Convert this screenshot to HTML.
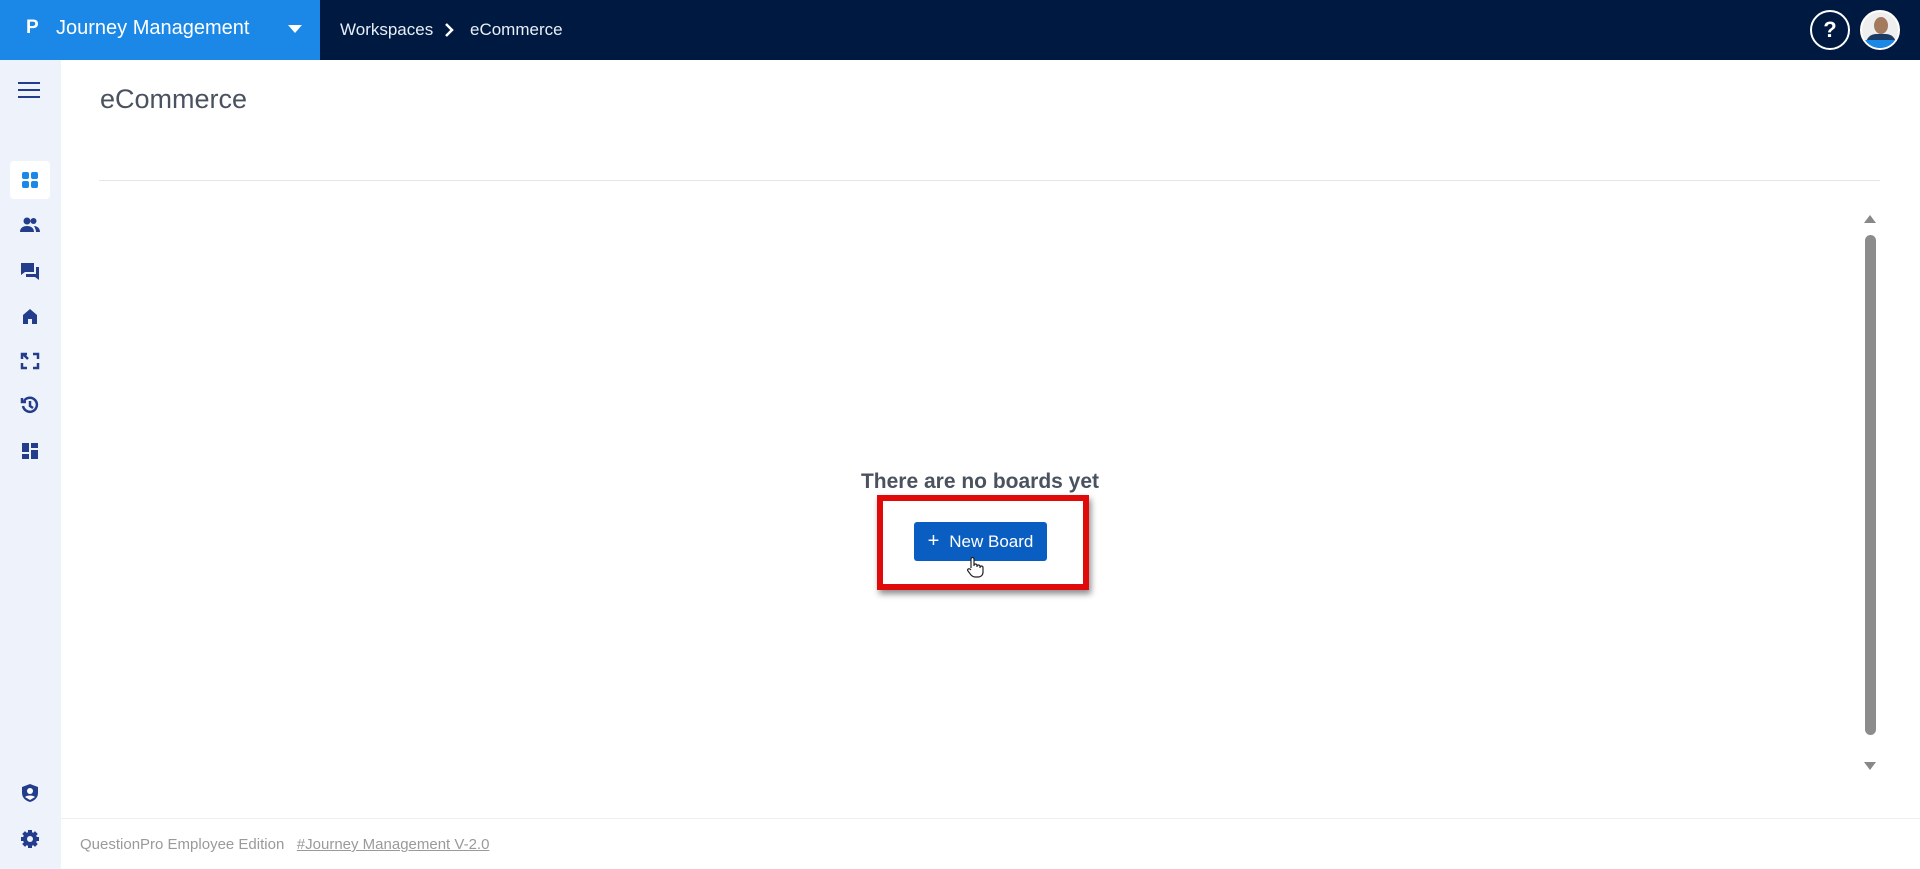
<!DOCTYPE html>
<html><head><meta charset="utf-8"><style>
*{margin:0;padding:0;box-sizing:border-box}
body{width:1920px;height:869px;overflow:hidden;background:#fff;font-family:"Liberation Sans",sans-serif;position:relative}
.hdr{position:absolute;left:0;top:0;width:1920px;height:60px;background:#001941}
.brand{position:absolute;left:0;top:0;width:320px;height:60px;background:#1b87e6;color:#fff}
.side{position:absolute;left:0;top:60px;width:61px;height:809px;background:#eef3fb}
.ic{position:absolute;left:20px;width:20px;height:20px}
.abs{position:absolute}
</style></head><body>
<div class="hdr">
 <div class="brand">
  <div class="abs" style="left:26px;top:17px;font-size:19px;font-weight:bold">P</div>
  <div class="abs" style="left:56px;top:17px;font-size:20px">Journey Management</div>
  <div class="abs" style="left:288px;top:25px;width:0;height:0;border-left:7px solid transparent;border-right:7px solid transparent;border-top:8px solid #fff"></div>
 </div>
 <div class="abs" style="left:340px;top:20px;font-size:17px;color:#e8eef8">Workspaces</div>
 <svg class="abs" style="left:444px;top:22px" width="10" height="16" viewBox="0 0 10 16"><path d="M2 2l6 6-6 6" fill="none" stroke="#fff" stroke-width="2.5"/></svg>
 <div class="abs" style="left:470px;top:20px;font-size:17px;color:#e8eef8">eCommerce</div>
 <div class="abs" style="left:1810px;top:10px;width:40px;height:40px;border:2px solid #fff;border-radius:50%;color:#fff;font-weight:bold;font-size:22px;text-align:center;line-height:36px">?</div>
 <div class="abs" style="left:1860px;top:10px;width:40px;height:40px;border:2px solid #fff;border-radius:50%;overflow:hidden;background:#eee">
  <div class="abs" style="left:12px;top:5px;width:14px;height:17px;border-radius:50%;background:#a47a5e"></div>
  <div class="abs" style="left:4px;top:22px;width:30px;height:20px;border-radius:10px 10px 0 0;background:#1b3a66"></div>
  <div class="abs" style="left:0;top:28px;width:40px;height:12px;background:#1b87e6"></div>
 </div>
</div>
<div class="side">
 <div class="abs" style="left:18px;top:22px;width:22px;height:2px;background:#233d8c;box-shadow:0 7px 0 #233d8c,0 14px 0 #233d8c"></div>
 <div class="abs" style="left:10px;top:101px;width:40px;height:38px;background:#fff;border-radius:4px"></div>
 <svg class="ic" style="top:110px" viewBox="0 0 20 20"><g fill="#1b87e6"><rect x="2" y="2" width="7" height="7" rx="2"/><rect x="11" y="2" width="7" height="7" rx="2"/><rect x="2" y="11" width="7" height="7" rx="2"/><rect x="11" y="11" width="7" height="7" rx="2"/></g></svg>
 <svg class="ic" style="top:155px" viewBox="0 0 20 20" fill="#233d8c"><circle cx="7" cy="6" r="3.5"/><circle cx="13.5" cy="6" r="3"/><path d="M0 17c0-4 3-6 7-6s7 2 7 6zM14 11c3 0 6 2 6 6h-4c0-2-1-4-2-6z"/></svg>
 <svg class="ic" style="top:201px" viewBox="0 0 20 20" fill="#233d8c"><path d="M1 2h13v9H5l-4 3z"/><path d="M16 6h3v13l-4-3H6v-3h10z"/></svg>
 <svg class="ic" style="top:246px" viewBox="0 0 20 20" fill="#233d8c"><path d="M10 3l7 6v9h-5v-5H8v5H3V9z"/></svg>
 <svg class="ic" style="top:291px" viewBox="0 0 20 20" fill="none" stroke="#233d8c" stroke-width="2.5"><path d="M2 8V3h5M13 3h5v5M18 12v5h-5M7 17H2v-5M3 3l5 5"/></svg>
 <svg class="ic" style="top:335px" viewBox="0 0 20 20" fill="none" stroke="#233d8c" stroke-width="2.5"><path d="M4 6a7 7 0 1 1-1 5"/><path d="M10 6v5l3 2"/><path d="M2 3v4h4" /></svg>
 <svg class="ic" style="top:381px" viewBox="0 0 20 20" fill="#233d8c"><rect x="2" y="2" width="7" height="9"/><rect x="11" y="2" width="7" height="5"/><rect x="2" y="13" width="7" height="5"/><rect x="11" y="9" width="7" height="9"/></svg>
 <svg class="ic" style="top:723px" viewBox="0 0 20 20" fill="#233d8c"><path d="M10 1l8 3v6c0 5-4 8-8 9-4-1-8-4-8-9V4z"/><circle cx="10" cy="8" r="3" fill="#fff"/><path d="M5 14c2-2 8-2 10 0l-5 3z" fill="#fff"/></svg>
 <svg class="ic" style="top:769px" viewBox="0 0 20 20"><g fill="#233d8c"><circle cx="10" cy="10" r="7"/><g stroke="#233d8c" stroke-width="4"><path d="M10 1v18M1 10h18M3.6 3.6l12.8 12.8M16.4 3.6L3.6 16.4"/></g></g><circle cx="10" cy="10" r="3" fill="#eef3fb"/></svg>
</div>
<div class="abs" style="left:100px;top:84px;font-size:27px;color:#4a5260">eCommerce</div>
<div class="abs" style="left:99px;top:180px;width:1781px;height:1px;background:#e3e6ea"></div>
<div class="abs" style="left:1864px;top:215px;width:0;height:0;border-left:6px solid transparent;border-right:6px solid transparent;border-bottom:8px solid #888"></div>
<div class="abs" style="left:1865px;top:235px;width:11px;height:500px;border-radius:6px;background:#8c8c8c"></div>
<div class="abs" style="left:1864px;top:762px;width:0;height:0;border-left:6px solid transparent;border-right:6px solid transparent;border-top:8px solid #888"></div>
<div class="abs" style="left:780px;top:470px;width:400px;text-align:center;font-size:21px;font-weight:bold;color:#4a5260">There are no boards yet</div>
<div class="abs" style="left:877px;top:495px;width:212px;height:95px;border:6px solid #e10a0a;box-shadow:2px 4px 6px rgba(0,0,0,.45)"></div>
<div class="abs" style="left:914px;top:522px;width:133px;height:39px;background:#0b5ec1;border-radius:3px;color:#fff;font-size:17px;line-height:39px;text-align:center"><span style="font-size:20px;margin-right:10px">+</span>New Board</div>
<svg class="abs" style="left:966px;top:556px" width="18" height="22" viewBox="0 0 18 22"><path d="M5 12V3a1.5 1.5 0 0 1 3 0v7M8 9.5a1.5 1.5 0 0 1 3 0V11M11 10.5a1.5 1.5 0 0 1 3 0V12M14 11.5a1.5 1.5 0 0 1 3 0V16c0 3-2 5-5 5H9c-2 0-3-1-4-2l-3-4c-1-1 0-3 2-2l1 1" fill="#fff" stroke="#222" stroke-width="1.2"/></svg>
<div class="abs" style="left:61px;top:818px;width:1859px;height:1px;background:#eef0f2"></div>
<div class="abs" style="left:80px;top:836px;font-size:15px;color:#9a9a9a">QuestionPro Employee Edition &nbsp;&nbsp;<u>#Journey Management V-2.0</u></div>
</body></html>
